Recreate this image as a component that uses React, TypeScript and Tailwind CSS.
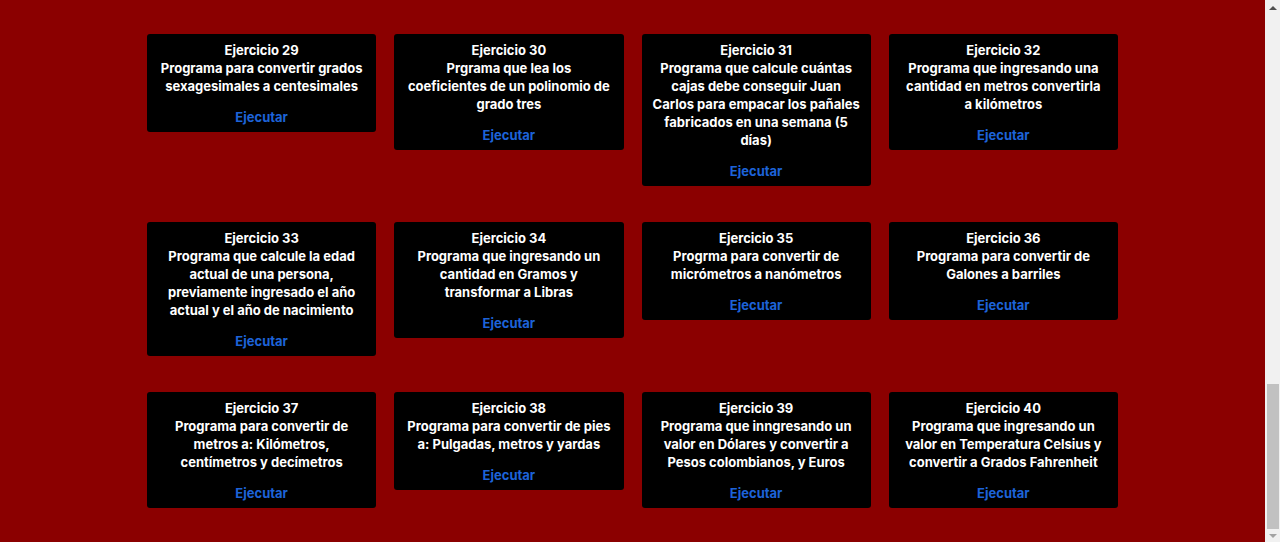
import React from 'react'

type Ejercicio = {
    num: number
    desc: string
}

// saltos de línea tal como aparecen en las tarjetas
const ejercicios: Ejercicio[] = [
    { num: 29, desc: "Programa para convertir grados\nsexagesimales a centesimales" },
    { num: 30, desc: "Prgrama que lea los\ncoeficientes de un polinomio de\ngrado tres" },
    { num: 31, desc: "Programa que calcule cuántas\ncajas debe conseguir Juan\nCarlos para empacar los pañales\nfabricados en una semana (5\ndías)" },
    { num: 32, desc: "Programa que ingresando una\ncantidad en metros convertirla\na kilómetros" },
    { num: 33, desc: "Programa que calcule la edad\nactual de una persona,\npreviamente ingresado el año\nactual y el año de nacimiento" },
    { num: 34, desc: "Programa que ingresando un\ncantidad en Gramos y\ntransformar a Libras" },
    { num: 35, desc: "Progrma para convertir de\nmicrómetros a nanómetros" },
    { num: 36, desc: "Programa para convertir de\nGalones a barriles" },
    { num: 37, desc: "Programa para convertir de\nmetros a: Kilómetros,\ncentímetros y decímetros" },
    { num: 38, desc: "Programa para convertir de pies\na: Pulgadas, metros y yardas" },
    { num: 39, desc: "Programa que inngresando un\nvalor en Dólares y convertir a\nPesos colombianos, y Euros" },
    { num: 40, desc: "Programa que ingresando un\nvalor en Temperatura Celsius y\nconvertir a Grados Fahrenheit" },
]

function Card({ item }: { item: Ejercicio }) {
    return (
        <div className='bg-black rounded-[3px] px-2 pt-[7px] pb-[6px] text-center text-white font-bold text-[13px] leading-[18px]'>
            <p>Ejercicio {item.num}</p>
            <p className='whitespace-pre-line'>{item.desc}</p>
            <a href="#" className='block mt-[13px] text-[#1d63d8]'>Ejecutar</a>
        </div>
    )
}

function Scrollbar() {
    return (
        <div className='w-[15px] h-full bg-[#f1f1f1] flex flex-col'>
            <div className='h-[15px] flex items-center justify-center'>
                <div className='w-0 h-0 border-x-[4px] border-x-transparent border-b-[4px] border-b-[#505050]' />
            </div>
            <div className='flex-1 flex flex-col justify-end pl-[2px] pr-[1px]'>
                <div className='h-[145px] bg-[#c1c1c1]' />
            </div>
            <div className='h-[13px] flex items-center justify-center'>
                <div className='w-0 h-0 border-x-[4px] border-x-transparent border-t-[4px] border-t-[#a3a3a3]' />
            </div>
        </div>
    )
}

export default function App() {
    return (
        <div className='h-[542px] flex bg-[#8b0000] font-["Inter",sans-serif] overflow-hidden'>
            <main className='flex-1 pt-[34px]'>
                <div className='w-[971px] mx-auto grid grid-cols-4 gap-x-[18px] gap-y-[36px] items-start'>
                    {ejercicios.map((item) => (
                        <Card key={item.num} item={item} />
                    ))}
                </div>
            </main>
            <Scrollbar />
        </div>
    )
}
